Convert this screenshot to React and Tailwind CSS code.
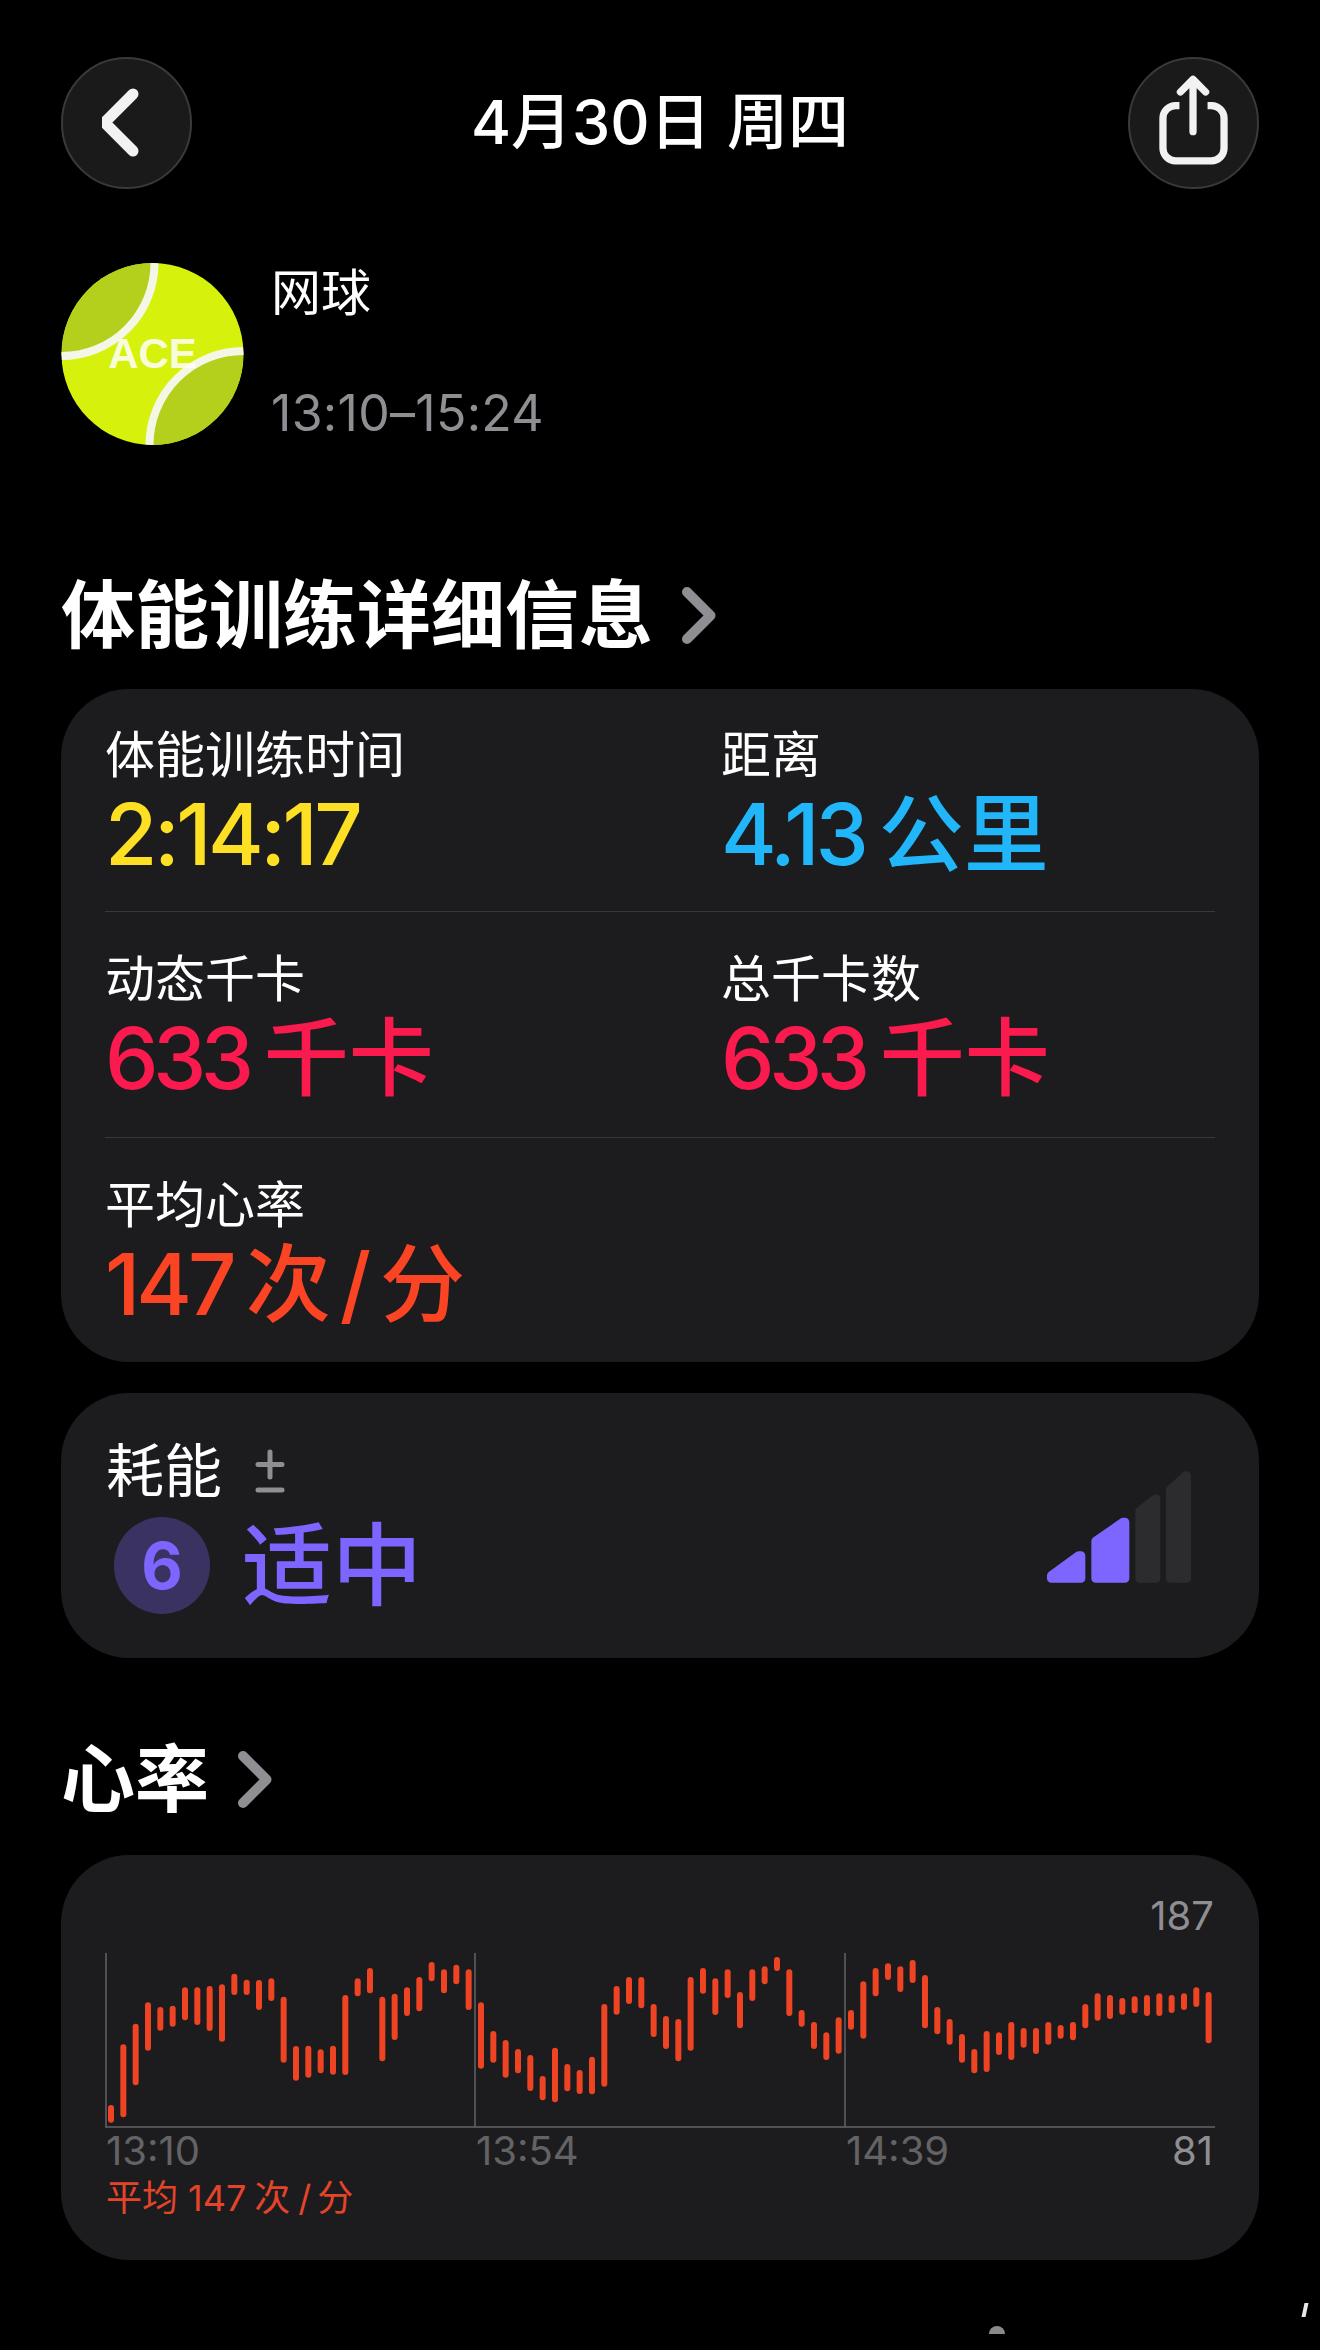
import React from 'react'

// [top, bottom] of each heart-rate bar, measured at 3x from y=1900
const HR_BARS = [
  [615, 668], [433, 652], [371, 556], [307, 452], [321, 392], [317, 380], [262, 361], [262, 375], [258, 393], [253, 425],
  [221, 285], [239, 285], [240, 330], [235, 303], [290, 488], [438, 542], [437, 533], [448, 520], [437, 524], [285, 525],
  [235, 289], [204, 280], [290, 484], [281, 420], [262, 348], [231, 334], [186, 244], [208, 280], [194, 253], [208, 330],
  [307, 506], [393, 488], [420, 533], [447, 520], [465, 573], [528, 601], [443, 607], [492, 574], [510, 582], [470, 583],
  [312, 560], [258, 344], [231, 312], [231, 325], [312, 411], [348, 447], [357, 484], [231, 452], [204, 281], [235, 345],
  [208, 294], [276, 385], [208, 303], [199, 253], [171, 213], [208, 348], [330, 380], [366, 447], [397, 480], [352, 461],
  [330, 389], [244, 416], [204, 289], [190, 240], [199, 276], [180, 249], [225, 385], [321, 403], [357, 434], [402, 488],
  [447, 520], [393, 516], [397, 465], [366, 480], [384, 443], [384, 462], [366, 434], [375, 416], [366, 421], [312, 385],
  [280, 362], [285, 357], [294, 344], [289, 340], [285, 348], [280, 348], [285, 339], [280, 330], [262, 321], [276, 430],
]

function Chevron() {
  return (
    <svg width="34" height="57" viewBox="0 0 34 57" fill="none">
      <path d="M5 5L28.5 28.5L5 52" stroke="#8e8e93" strokeWidth="10" strokeLinecap="round" strokeLinejoin="round" />
    </svg>
  )
}

function SectionTitle({ children }) {
  return (
    <div className="flex h-[90px] items-center gap-[29px] text-[74px] font-bold text-white">
      <span>{children}</span>
      <Chevron />
    </div>
  )
}

function Metric({ label, color, children }) {
  return (
    <div className="flex-1">
      <div className="text-[50px] leading-[60px] text-white">{label}</div>
      <div className={`mt-[5px] flex h-[90px] items-center text-[85px] leading-[90px] font-medium ${color}`}>{children}</div>
    </div>
  )
}

function TennisBall() {
  return (
    <svg width="183" height="182" viewBox="0 0 182 182" className="shrink-0">
      <defs>
        <clipPath id="ball">
          <circle cx="91" cy="91" r="91" />
        </clipPath>
      </defs>
      <g clipPath="url(#ball)">
        <rect width="182" height="182" fill="#d6f20c" />
        <circle cx="0" cy="0" r="93" fill="#b4d01c" stroke="#f4f7e6" strokeWidth="8" />
        <circle cx="182" cy="182" r="94" fill="#b4d01c" stroke="#f4f7e6" strokeWidth="8" />
      </g>
      <text x="91" y="105" textAnchor="middle" fontSize="42" fontWeight="700" fontFamily="Liberation Sans, sans-serif" fill="#ffffff" fillOpacity="0.85">
        ACE
      </text>
    </svg>
  )
}

function EffortBars() {
  return (
    <svg width="144" height="112" viewBox="260 152 432 335" className="mb-[31px]" strokeWidth="26" strokeLinejoin="round">
      <polygon points="273,474 273,465 355,405 362,405 362,474" fill="#7d65ff" stroke="#7d65ff" />
      <polygon points="406,474 406,362 488,305 494,305 494,474" fill="#7d65ff" stroke="#7d65ff" />
      <polygon points="538,474 538,272 585,235 587,235 587,474" fill="#2c2c2e" stroke="#2c2c2e" />
      <polygon points="630,474 630,207 677,165 679,165 679,474" fill="#2c2c2e" stroke="#2c2c2e" />
    </svg>
  )
}

function HeartChart() {
  return (
    <svg width="1110" height="175" viewBox="0 0 1110 175" className="mt-[14px] block">
      <path d="M1 0V174M370 0V174M740 0V174M0 174H1110" stroke="#636366" strokeWidth="1.5" fill="none" />
      {HR_BARS.map(([top, bottom], i) => (
        <rect
          key={i}
          x={3 + i * 12.333}
          y={top / 3 - 53}
          width="6"
          height={(bottom - top) / 3}
          rx="3"
          fill="#ef4423"
        />
      ))}
    </svg>
  )
}

export default function App() {
  return (
    <div className="relative h-[2350px] w-[1320px] overflow-hidden bg-black px-[61px] pt-[57px] font-[Inter,'Noto_Sans_CJK_SC',sans-serif] text-white">
      <header className="flex items-center justify-between">
        <button className="flex h-[132px] w-[131px] items-center justify-center rounded-full border-2 border-[#3a3a3c] bg-[#1a1a1a]">
          <svg width="50" height="78" viewBox="0 0 50 78" fill="none">
            <path d="M31 10L2.5 38.5L31 67" stroke="#f2f2f2" strokeWidth="11" strokeLinecap="round" strokeLinejoin="round" />
          </svg>
        </button>
        <h1 className="text-[61px] font-medium">4月30日 周四</h1>
        <button className="flex h-[132px] w-[131px] items-center justify-center rounded-full border-2 border-[#3a3a3c] bg-[#1a1a1a]">
          <svg width="131" height="132" viewBox="0 0 131 132" fill="none" stroke="#f2f2f2" strokeWidth="7.5" strokeLinecap="round" strokeLinejoin="round">
            <path d="M51 48H47A13 13 0 0 0 34 61V92A13 13 0 0 0 47 105H84A13 13 0 0 0 97 92V61A13 13 0 0 0 84 48H80" strokeLinecap="butt" />
            <path d="M65 75V22M52 34L65 21L78 34" />
          </svg>
        </button>
      </header>

      <section className="mt-[74px] flex gap-[27px]">
        <TennisBall />
        <div>
          <div className="text-[50px] leading-[60px]">网球</div>
          <div className="mt-[60px] text-[50px] leading-[60px] tracking-[0.3px] text-[#8e8e93]">13:10–15:24</div>
        </div>
      </section>

      <div className="mt-[125px]">
        <SectionTitle>体能训练详细信息</SectionTitle>
      </div>

      <section className="mt-[29px] h-[673px] rounded-[68px] bg-[#1c1c1e] pt-[36px] pr-[44px] pl-[44px]">
        <div className="flex h-[187px] border-b border-[#38383a]">
          <Metric label="体能训练时间" color="text-[#fde023]">
            <span className="font-[550] tracking-[-3.5px]">2:14:17</span>
          </Metric>
          <div className="w-[494px] shrink-0">
            <Metric label="距离" color="text-[#20b6f9]">
              <span className="font-[550] tracking-[-4px]">4.13</span>
              <span className="ml-[14px]">公里</span>
            </Metric>
          </div>
        </div>
        <div className="flex h-[226px] border-b border-[#38383a] pt-[37px]">
          <Metric label="动态千卡" color="text-[#fb1a4e]">
            <span className="font-[550] tracking-[-5.5px]">633</span>
            <span className="ml-[15px]">千卡</span>
          </Metric>
          <div className="w-[494px] shrink-0">
            <Metric label="总千卡数" color="text-[#fb1a4e]">
              <span className="font-[550] tracking-[-5.5px]">633</span>
              <span className="ml-[15px]">千卡</span>
            </Metric>
          </div>
        </div>
        <div className="flex pt-[37px]">
          <Metric label="平均心率" color="text-[#fb4423]">
            <span className="font-[550] tracking-[-4px]">147</span>
            <span className="ml-[13px]">次</span>
            <span className="mx-[9px] font-[550]">/</span>
            <span>分</span>
          </Metric>
        </div>
      </section>

      <section className="mt-[31px] flex h-[265px] items-end justify-between rounded-[68px] bg-[#1c1c1e] pr-[68px] pb-[44px] pl-[45px]">
        <div>
          <div className="flex items-center gap-[33px]">
            <span className="text-[58px] leading-[60px] text-white">耗能</span>
            <svg width="30" height="44" viewBox="0 0 30 44" stroke="#8e8e93" strokeWidth="5" strokeLinecap="round">
              <path d="M15 3V28M3 15.5H27M3 41H27" />
            </svg>
          </div>
          <div className="mt-[16px] flex items-center gap-[32px] pl-[8px]">
            <div className="flex h-[97px] w-[96px] items-center justify-center rounded-full bg-[#3a3260] text-[64px] font-bold text-[#7d65ff]">
              6
            </div>
            <span className="text-[90px] leading-[97px] font-medium text-[#7d65ff]">适中</span>
          </div>
        </div>
        <EffortBars />
      </section>

      <div className="mt-[76px]">
        <SectionTitle>心率</SectionTitle>
      </div>

      <section className="mt-[31px] h-[405px] rounded-[68px] bg-[#1c1c1e] pt-[38px] pl-[44px]">
        <div className="pr-[45px] text-right text-[40px] leading-[46px] text-[#8e8e93]">187</div>
        <HeartChart />
        <div className="grid w-[1110px] grid-cols-3 text-[40px] leading-[46px] text-[#636366]">
          <span className="pl-[1px]">13:10</span>
          <span className="pl-[1px]">13:54</span>
          <div className="flex justify-between pr-[2px]">
            <span className="pl-[1px]">14:39</span>
            <span className="text-[#8e8e93]">81</span>
          </div>
        </div>
        <div className="mt-[1px] flex pl-[1px] text-[36px] leading-[46px] text-[#e5442a]">
          <span>平均</span>
          <span className="ml-[10px]">147</span>
          <span className="ml-[8px]">次</span>
          <span className="ml-[8px]">/</span>
          <span className="ml-[6px]">分</span>
        </div>
      </section>

      <span className="absolute top-[2326px] left-[989px] h-[8px] w-[16px] rounded-t-full bg-[#8a8a8a]" />
      <span className="absolute top-[2303px] left-[1303px] h-[14px] w-[4px] -skew-x-12 bg-[#e8e8e8]" />
    </div>
  )
}
